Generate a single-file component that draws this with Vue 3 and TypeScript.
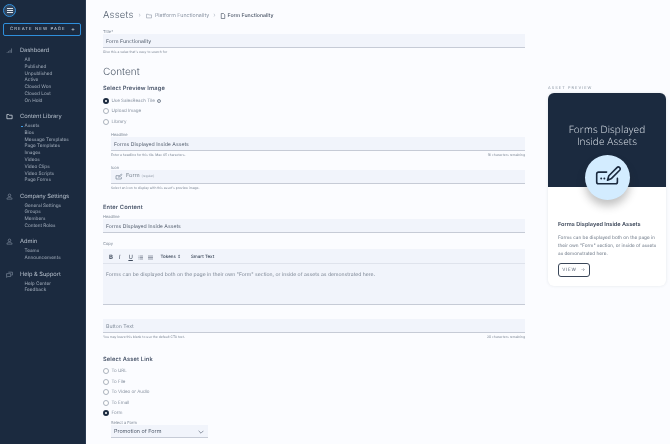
<script setup lang="ts">
interface NavGroup { title: string; icon: string; items: string[]; }
const nav: NavGroup[] = [
  { title: 'Dashboard', icon: 'bars', items: ['All', 'Published', 'Unpublished', 'Active', 'Closed Won', 'Closed Lost', 'On Hold'] },
  { title: 'Content Library', icon: 'folder', items: ['Assets', 'Bios', 'Message Templates', 'Page Templates', 'Images', 'Videos', 'Video Clips', 'Video Scripts', 'Page Forms'] },
  { title: 'Company Settings', icon: 'user', items: ['General Settings', 'Groups', 'Members', 'Content Roles'] },
  { title: 'Admin', icon: 'user', items: ['Teams', 'Announcements'] },
  { title: 'Help & Support', icon: 'chat', items: ['Help Center', 'Feedback'] },
];
const linkOptions = ['To URL', 'To File', 'To Video or Audio', 'To Email', 'Form'];
</script>

<template>
  <div class="page">
    <aside class="sidebar">
      <div class="burger"><span></span><span></span><span></span></div>
      <div class="create"><span>CREATE NEW PAGE</span><span class="plus">+</span></div>
      <nav class="nav">
        <section v-for="g in nav" :key="g.title" class="group">
          <div class="group-title">
            <svg class="nav-icon" viewBox="0 0 12 12" fill="none" stroke="#8b97a8" stroke-width="1">
              <template v-if="g.icon === 'bars'"><path d="M2 10V8.500M4.500 10V7M7 10V5M9.500 10V2.500" /></template>
              <template v-else-if="g.icon === 'folder'"><path d="M1.500 2.500h3l1 1.300h5v6h-9z" stroke="#d8dee6" stroke-width="1.300" /></template>
              <template v-else-if="g.icon === 'user'"><circle cx="6" cy="4" r="2.200" /><path d="M1.500 10.500c.4-2.600 2-3.400 4.500-3.400s4.100.8 4.500 3.400z" /></template>
              <template v-else><path d="M4 2h7v5H9M1 4.500h7v5H3L1 11z" /></template>
            </svg>
            <span>{{ g.title }}</span>
          </div>
          <ul class="sub">
            <li v-for="i in g.items" :key="i" :class="{ current: i === 'Assets' }">{{ i }}</li>
          </ul>
        </section>
      </nav>
    </aside>

    <main class="main">
      <div class="form-col">
        <header class="crumbs">
          <h1>Assets</h1>
          <span class="chev">›</span>
          <svg class="crumb-icon" viewBox="0 0 12 12" fill="none" stroke="#7c8796"><path d="M1 2.500h3.500l1 1.300H11v6H1z" /></svg>
          <span class="crumb">Platform Functionality</span>
          <span class="chev second">›</span>
          <svg class="crumb-icon file" viewBox="0 0 12 12" fill="none" stroke="#3b4658" stroke-width="1.200"><path d="M2.500 1h4.500l2.500 2.500V11h-7z" /></svg>
          <span class="crumb dark">Form Functionality</span>
        </header>

        <label class="label title-label">Title*</label>
        <div class="input">Form Functionality</div>
        <p class="help">Give this a value that's easy to search for</p>

        <h2>Content</h2>
        <h3 class="preview-head">Select Preview Image</h3>
        <div class="radios">
          <div class="radio on"><i></i><span>Use SalesReach Tile</span><b class="q">?</b></div>
          <div class="radio"><i></i><span>Upload Image</span></div>
          <div class="radio"><i></i><span>Library</span></div>
        </div>

        <div class="indent">
          <label class="label headline-label">Headline</label>
          <div class="input">Forms Displayed Inside Assets</div>
          <div class="help-row"><p class="help">Enter a headline for this tile. Max 45 characters.</p><p class="help">16 characters remaining</p></div>
          <label class="label icon-label">Icon</label>
          <div class="input icon-input">
            <svg class="form-mini" viewBox="0 0 24 24" fill="none" stroke="#59677a" stroke-width="1.600"><path d="M13 8H3v10h16v-6" /><path d="M11 13l1-3 7-7 2 2-7 7z" /><path d="M6.500 13h.01M9.500 13h.01" /></svg>
            <span>Form</span><small>(regular)</small>
          </div>
          <p class="help">Select an icon to display with this asset's preview image.</p>
        </div>

        <h3 class="enter-head">Enter Content</h3>
        <label class="label enter-label">Headline</label>
        <div class="input">Forms Displayed Inside Assets</div>

        <label class="label copy-label">Copy</label>
        <div class="toolbar">
          <b class="tool">B</b><em class="tool">I</em><u class="tool">U</u>
          <span class="tool list">
            <svg viewBox="0 0 10 10" stroke="#3e4a5c" fill="none"><path d="M3 2h7M3 5h7M3 8h7M.5 2h1M.5 5h1M.5 8h1" /></svg>
          </span>
          <span class="tool list">
            <svg viewBox="0 0 10 10" stroke="#3e4a5c" fill="none"><path d="M0 2h10M0 5h10M0 8h10" /></svg>
          </span>
          <span class="tb-text tokens">Tokens ⇕</span>
          <span class="tb-text">Smart Text</span>
        </div>
        <div class="editor">Forms can be displayed both on the page in their own "Form" section, or inside of assets as demonstrated here.</div>

        <div class="input muted button-field">Button Text</div>
        <div class="help-row"><p class="help">You may leave this blank to use the default CTA text.</p><p class="help">20 characters remaining</p></div>

        <h3 class="link-head">Select Asset Link</h3>
        <div class="radios link-radios">
          <div v-for="o in linkOptions" :key="o" class="radio" :class="{ on: o === 'Form' }"><i></i><span>{{ o }}</span></div>
        </div>
        <div class="indent">
          <label class="label select-label">Select a Form</label>
          <div class="select">
            <span>Promotion of Form</span>
            <svg viewBox="0 0 10 6" fill="none" stroke="#4a5568" stroke-width="1"><path d="M1 1l4 4 4-4" /></svg>
          </div>
        </div>
      </div>

      <div class="preview-col">
        <div class="preview-label">ASSET PREVIEW</div>
        <article class="card">
          <div class="hero">
            <div class="hero-title">Forms Displayed<br />Inside Assets</div>
            <div class="badge">
              <svg viewBox="0 0 30 30" fill="none" stroke="#1b2a3f" stroke-width="1.800" stroke-linecap="round" stroke-linejoin="round">
                <path d="M14 9H5a2 2 0 0 0-2 2v9a2 2 0 0 0 2 2h19a2 2 0 0 0 2-2v-4" />
                <path d="M15 18l1.500-5 9-9a2 2 0 0 1 3 3l-9 9z" />
                <path d="M8 16h.01M11.500 16h.01" stroke-width="2.200" />
              </svg>
            </div>
          </div>
          <div class="card-body">
            <h4>Forms Displayed Inside Assets</h4>
            <p>Forms can be displayed both on the page in their own "Form" section, or inside of assets as demonstrated here.</p>
            <div class="view">VIEW<span>→</span></div>
          </div>
        </article>
      </div>
    </main>
  </div>
</template>

<style>
html, body { margin: 0; background: #fbfcff; }
</style>

<style scoped>
* { box-sizing: border-box; }
.page { display: flex; width: 670px; height: 444px; overflow: hidden; font-family: Inter, "Liberation Sans", sans-serif; background: #fbfcff; color: #4a5568; text-rendering: geometricPrecision; filter: blur(0.3px); }
.sidebar { width: 86px; flex: none; background: #1b2a3f; border-right: 1px solid #2a3a50; padding: 4px 3px 0; }
.burger { width: 13px; height: 13px; border: 1px solid #2f8fdc; border-radius: 50%; background: #33465e; display: flex; flex-direction: column; align-items: center; justify-content: center; gap: 1px; }
.burger span { display: block; width: 6px; height: 1px; background: #dfe6ee; }
.create { width: 78px; height: 13px; margin-top: 6px; border: 1px solid #2f8fdc; border-radius: 2px; display: flex; justify-content: space-between; align-items: center; padding: 0 5px 0 6px; color: #cfd7e1; font-size: 4.300px; letter-spacing: 1.050px; white-space: nowrap; }
.plus { letter-spacing: 0; font-size: 6px; }
.nav { margin-top: 9.500px; }
.group { margin-bottom: 7.100px; }
.group-title { display: flex; align-items: center; height: 10px; margin-bottom: 1.600px; color: #b9c3cf; font-size: 5.700px; }
.nav-icon { width: 7px; height: 7px; margin: 0 7px 0 3px; flex: none; }
.sub { list-style: none; margin: 0; padding: 0 0 0 21.500px; color: #a3aebc; font-size: 4.700px; line-height: 6.770px; }
.sub li { white-space: nowrap; position: relative; }
.current::before { content: ""; position: absolute; left: -4px; top: 3px; width: 2px; height: 1px; background: #3d9be6; }
.main { flex: 1; display: flex; min-width: 0; padding-left: 17px; }
.form-col { width: 422px; flex: none; }
.crumbs { display: flex; align-items: center; height: 29px; padding-top: 2px; white-space: nowrap; }
h1 { margin: 0; font-weight: 300; font-size: 9.500px; color: #525e6e; letter-spacing: 0.200px; }
.chev { color: #b6bdc8; font-size: 6px; margin: 0 5px; }
.chev.second { margin: 0 4px; }
.crumb-icon { width: 6px; height: 6px; margin-right: 2px; }
.crumb-icon.file { margin-right: 1px; }
.crumb { font-size: 5.300px; color: #8a94a3; margin-left: 1px; }
.crumb.dark { color: #485365; font-weight: 500; font-size: 5.200px; }
.label { display: block; font-size: 4px; line-height: 5px; color: #7d8896; }
.input { height: 14px; background: #f1f4fb; border-bottom: 1px solid #c6cbd6; font-size: 5.200px; line-height: 16px; padding-left: 3px; color: #505b6b; white-space: nowrap; }
.muted { color: #7f8a98; }
.help { margin: 1.500px 0 0; font-size: 3.300px; line-height: 5px; color: #7b8694; }
.help-row { display: flex; justify-content: space-between; }
h2 { margin: 10px 0 0; font-weight: 300; font-size: 10px; line-height: 14px; color: #4c5868; }
h3 { margin: 0; font-weight: 600; font-size: 5.700px; line-height: 8px; color: #49556a; letter-spacing: 0.150px; }
.preview-head { margin-top: 6px; }
.radios { margin-top: 3px; }
.radio { display: flex; align-items: center; height: 10.500px; font-size: 4.500px; color: #8a94a2; }
.radio i { width: 6px; height: 6px; margin-right: 2.500px; border: 0.700px solid #aab2bd; border-radius: 50%; background: #fff; flex: none; }
.radio span { margin-top: 1px; }
.radio.on i { border: 2px solid #1b2a3f; }
.q { width: 4px; height: 4px; margin-left: 2px; border: 0.500px solid #7f8a98; border-radius: 50%; font-size: 3px; line-height: 3px; text-align: center; font-weight: 400; }
.indent { padding-left: 8px; }
.headline-label { margin-top: 5px; }
.icon-label { margin-top: 7.500px; }
.icon-input { display: flex; align-items: center; padding-left: 4px; color: #78838f; font-size: 5.600px; line-height: 13px; }
.form-mini { width: 8px; height: 8px; margin-right: 3px; }
.icon-input small { font-size: 3.200px; margin-left: 2px; color: #9aa3af; }
.enter-head { margin-top: 13.500px; }
.enter-label { margin-top: 2px; }
.copy-label { margin-top: 8px; margin-bottom: 3px; }
.toolbar { height: 14px; background: #f1f4fb; display: flex; align-items: center; padding: 2px 0 0 6px; font-size: 5.300px; color: #3e4a5c; white-space: nowrap; }
.tool { width: 9.700px; font-size: 6px; display: block; }
.list svg { display: block; width: 5px; height: 5px; }
.tb-text { font-size: 4.500px; font-weight: 500; }
.tokens { margin-left: 3px; margin-right: 10px; }
.editor { height: 42px; background: #f1f4fb; border-top: 1px solid #dfe3ec; border-bottom: 1px solid #c6cbd6; padding: 8px 3px 0; font-size: 5.100px; color: #7c8694; white-space: nowrap; }
.button-field { margin-top: 14px; }
.link-head { margin-top: 16px; }
.link-radios { margin-top: 2.500px; }
.select-label { margin-top: 1px; }
.select { width: 97px; height: 13.500px; background: #f1f4fb; border-bottom: 1px solid #c6cbd6; display: flex; justify-content: space-between; align-items: center; padding: 2px 4px 0 3px; font-size: 5.400px; color: #4f5a6a; }
.select svg { width: 6px; height: 4px; }
.preview-col { width: 118px; margin-left: 23px; padding-top: 85px; flex: none; }
.preview-label { font-size: 3.900px; line-height: 5px; letter-spacing: 1.050px; color: #8a95a2; margin-bottom: 3px; white-space: nowrap; }
.card { height: 193px; background: #fff; border-radius: 6px; box-shadow: 0 0 3px rgba(60, 70, 90, 0.12); overflow: hidden; }
.hero { height: 94px; background: #1b2a3f; position: relative; text-align: center; padding-top: 30px; color: #dfe5ec; font-family: "Open Sans", sans-serif; font-weight: 300; font-size: 10px; line-height: 12px; }
.hero-title { letter-spacing: 0.150px; }
.badge { position: absolute; left: 37px; top: 62px; width: 45px; height: 45px; border-radius: 50%; background: #d3ecff; display: flex; align-items: center; justify-content: center; box-shadow: 0 6px 8px rgba(40, 40, 40, 0.28); }
.badge svg { width: 27px; height: 27px; }
.card-body { padding: 35px 8px 0 10px; }
h4 { margin: 0; font-size: 5.600px; line-height: 7px; font-weight: 600; color: #3b4658; white-space: nowrap; }
.card-body p { margin: 6px 0 0; font-size: 4.700px; line-height: 7.800px; color: #6f7a88; }
.view { display: flex; justify-content: center; gap: 4px; align-items: center; width: 32px; height: 14px; margin-top: 5px; border: 1px solid #3a4658; border-radius: 3px; font-size: 4.500px; letter-spacing: 0.800px; color: #566273; }
</style>
